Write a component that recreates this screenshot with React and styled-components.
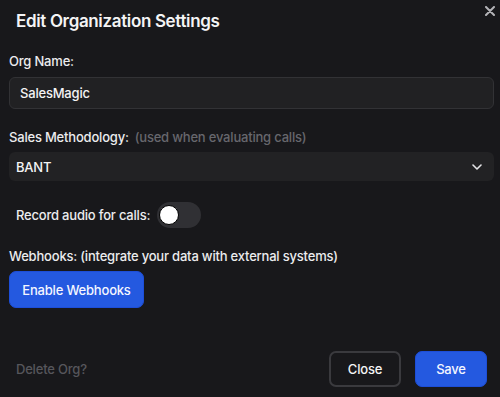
import React, { useState } from 'react';
import styled, { createGlobalStyle } from 'styled-components';

const GlobalStyle = createGlobalStyle`
  html, body {
    margin: 0;
    padding: 0;
    background: #18181b;
  }
  body {
    font-family: Inter, "Noto Sans", sans-serif;
    color: #f4f4f5;
    -webkit-font-smoothing: antialiased;
  }
`;

const Dialog = styled.div`
  position: relative;
  box-sizing: border-box;
  width: 500px;
  height: 397px;
  background: #18181b;
  padding: 9px 6px 10px 9px;
  display: flex;
  flex-direction: column;
`;

const Title = styled.h2`
  margin: 0 0 0 7px;
  font-size: 17px;
  font-weight: 600;
  letter-spacing: -0.35px;
  line-height: 24px;
  color: #f4f4f5;
`;

const CloseIcon = styled.button`
  position: absolute;
  top: 5px;
  right: 4px;
  width: 12px;
  height: 12px;
  padding: 0;
  border: none;
  background: none;
  display: flex;
  align-items: center;
  justify-content: center;
  color: #b4b4b8;
`;

const Field = styled.div`
  display: flex;
  flex-direction: column;
  margin-top: ${(p) => p.$top}px;
`;

const Label = styled.label`
  font-size: 13px;
  font-weight: 500;
  letter-spacing: -0.2px;
  line-height: 18px;
  color: #ececee;
  margin-bottom: ${(p) => p.$gap || 6}px;
`;

const Hint = styled.span`
  color: #67676d;
  font-weight: 500;
  margin-left: 6px;
`;

const TextInput = styled.input`
  box-sizing: border-box;
  height: 32px;
  width: 100%;
  padding: 0 10px;
  background: #212123;
  border: 1px solid #323235;
  border-radius: 6px;
  color: #f4f4f5;
  font-family: inherit;
  font-size: 13px;
  font-weight: 500;
  letter-spacing: -0.2px;
  outline: none;
`;

const Select = styled.div`
  box-sizing: border-box;
  height: 29px;
  display: flex;
  align-items: center;
  justify-content: space-between;
  padding: 0 12px 0 7px;
  background: #222224;
  border-radius: 6px;
  font-size: 13px;
  font-weight: 500;
  letter-spacing: -0.2px;
  color: #f4f4f5;
`;

const ToggleRow = styled.div`
  display: flex;
  align-items: center;
  gap: 7px;
  margin: 21px 0 0 7px;
  font-size: 13px;
  font-weight: 500;
  letter-spacing: -0.2px;
  color: #ececee;
`;

const Switch = styled.button`
  position: relative;
  width: 44px;
  height: 26px;
  padding: 0;
  border: none;
  border-radius: 13px;
  background: ${(p) => (p.$on ? '#2563eb' : '#303034')};
  cursor: pointer;
`;

const Knob = styled.span`
  position: absolute;
  top: 3px;
  left: ${(p) => (p.$on ? 21 : 2)}px;
  width: 20px;
  height: 20px;
  box-sizing: border-box;
  border-radius: 50%;
  background: #fff;
  border: 1px solid #000;
`;

const PrimaryButton = styled.button`
  box-sizing: border-box;
  height: 37px;
  padding: 0;
  border: 1px solid #1d4ed8;
  border-radius: 7px;
  background: #2459e0;
  color: #f4f6ff;
  font-family: inherit;
  font-size: 13px;
  font-weight: 500;
  letter-spacing: -0.2px;
  white-space: nowrap;
  cursor: pointer;
`;

const WebhookButton = styled(PrimaryButton)`
  align-self: flex-start;
  width: 135px;
`;

const Footer = styled.div`
  margin-top: auto;
  display: flex;
  align-items: center;
  padding-right: 7px;
`;

const DeleteLink = styled.span`
  margin-left: 7px;
  font-size: 13px;
  font-weight: 500;
  letter-spacing: -0.2px;
  color: #56565b;
  flex: 1;
`;

const GhostButton = styled.button`
  box-sizing: border-box;
  width: 72px;
  height: 36px;
  border: 2px solid #3a3a3e;
  border-radius: 7px;
  background: #18181b;
  color: #f4f4f5;
  font-family: inherit;
  font-size: 13px;
  font-weight: 500;
  letter-spacing: -0.2px;
  margin-right: 14px;
`;

const SaveButton = styled(PrimaryButton)`
  width: 72px;
  height: 36px;
`;

export default function App() {
  const [recording, setRecording] = useState(false);

  return (
    <>
      <GlobalStyle />
      <Dialog>
        <Title>Edit Organization Settings</Title>
        <CloseIcon aria-label="close">
          <svg width="10" height="10" viewBox="0 0 10 10">
            <path d="M1 1 L9 9 M9 1 L1 9" stroke="currentColor" strokeWidth="2" strokeLinecap="round" />
          </svg>
        </CloseIcon>

        <Field $top={19}>
          <Label $gap={7}>Org Name:</Label>
          <TextInput defaultValue="SalesMagic" />
        </Field>

        <Field $top={19}>
          <Label $gap={6}>
            Sales Methodology:<Hint>(used when evaluating calls)</Hint>
          </Label>
          <Select>
            BANT
            <svg width="10" height="6" viewBox="0 0 10 6">
              <path d="M1 1 L5 5 L9 1" stroke="#e4e4e7" strokeWidth="1.6" fill="none" strokeLinecap="round" strokeLinejoin="round" />
            </svg>
          </Select>
        </Field>

        <ToggleRow>
          Record audio for calls:
          <Switch $on={recording} onClick={() => setRecording(!recording)}>
            <Knob $on={recording} />
          </Switch>
        </ToggleRow>

        <Field $top={19}>
          <Label $gap={6}>Webhooks: (integrate your data with external systems)</Label>
          <WebhookButton>Enable Webhooks</WebhookButton>
        </Field>

        <Footer>
          <DeleteLink>Delete Org?</DeleteLink>
          <GhostButton>Close</GhostButton>
          <SaveButton>Save</SaveButton>
        </Footer>
      </Dialog>
    </>
  );
}
